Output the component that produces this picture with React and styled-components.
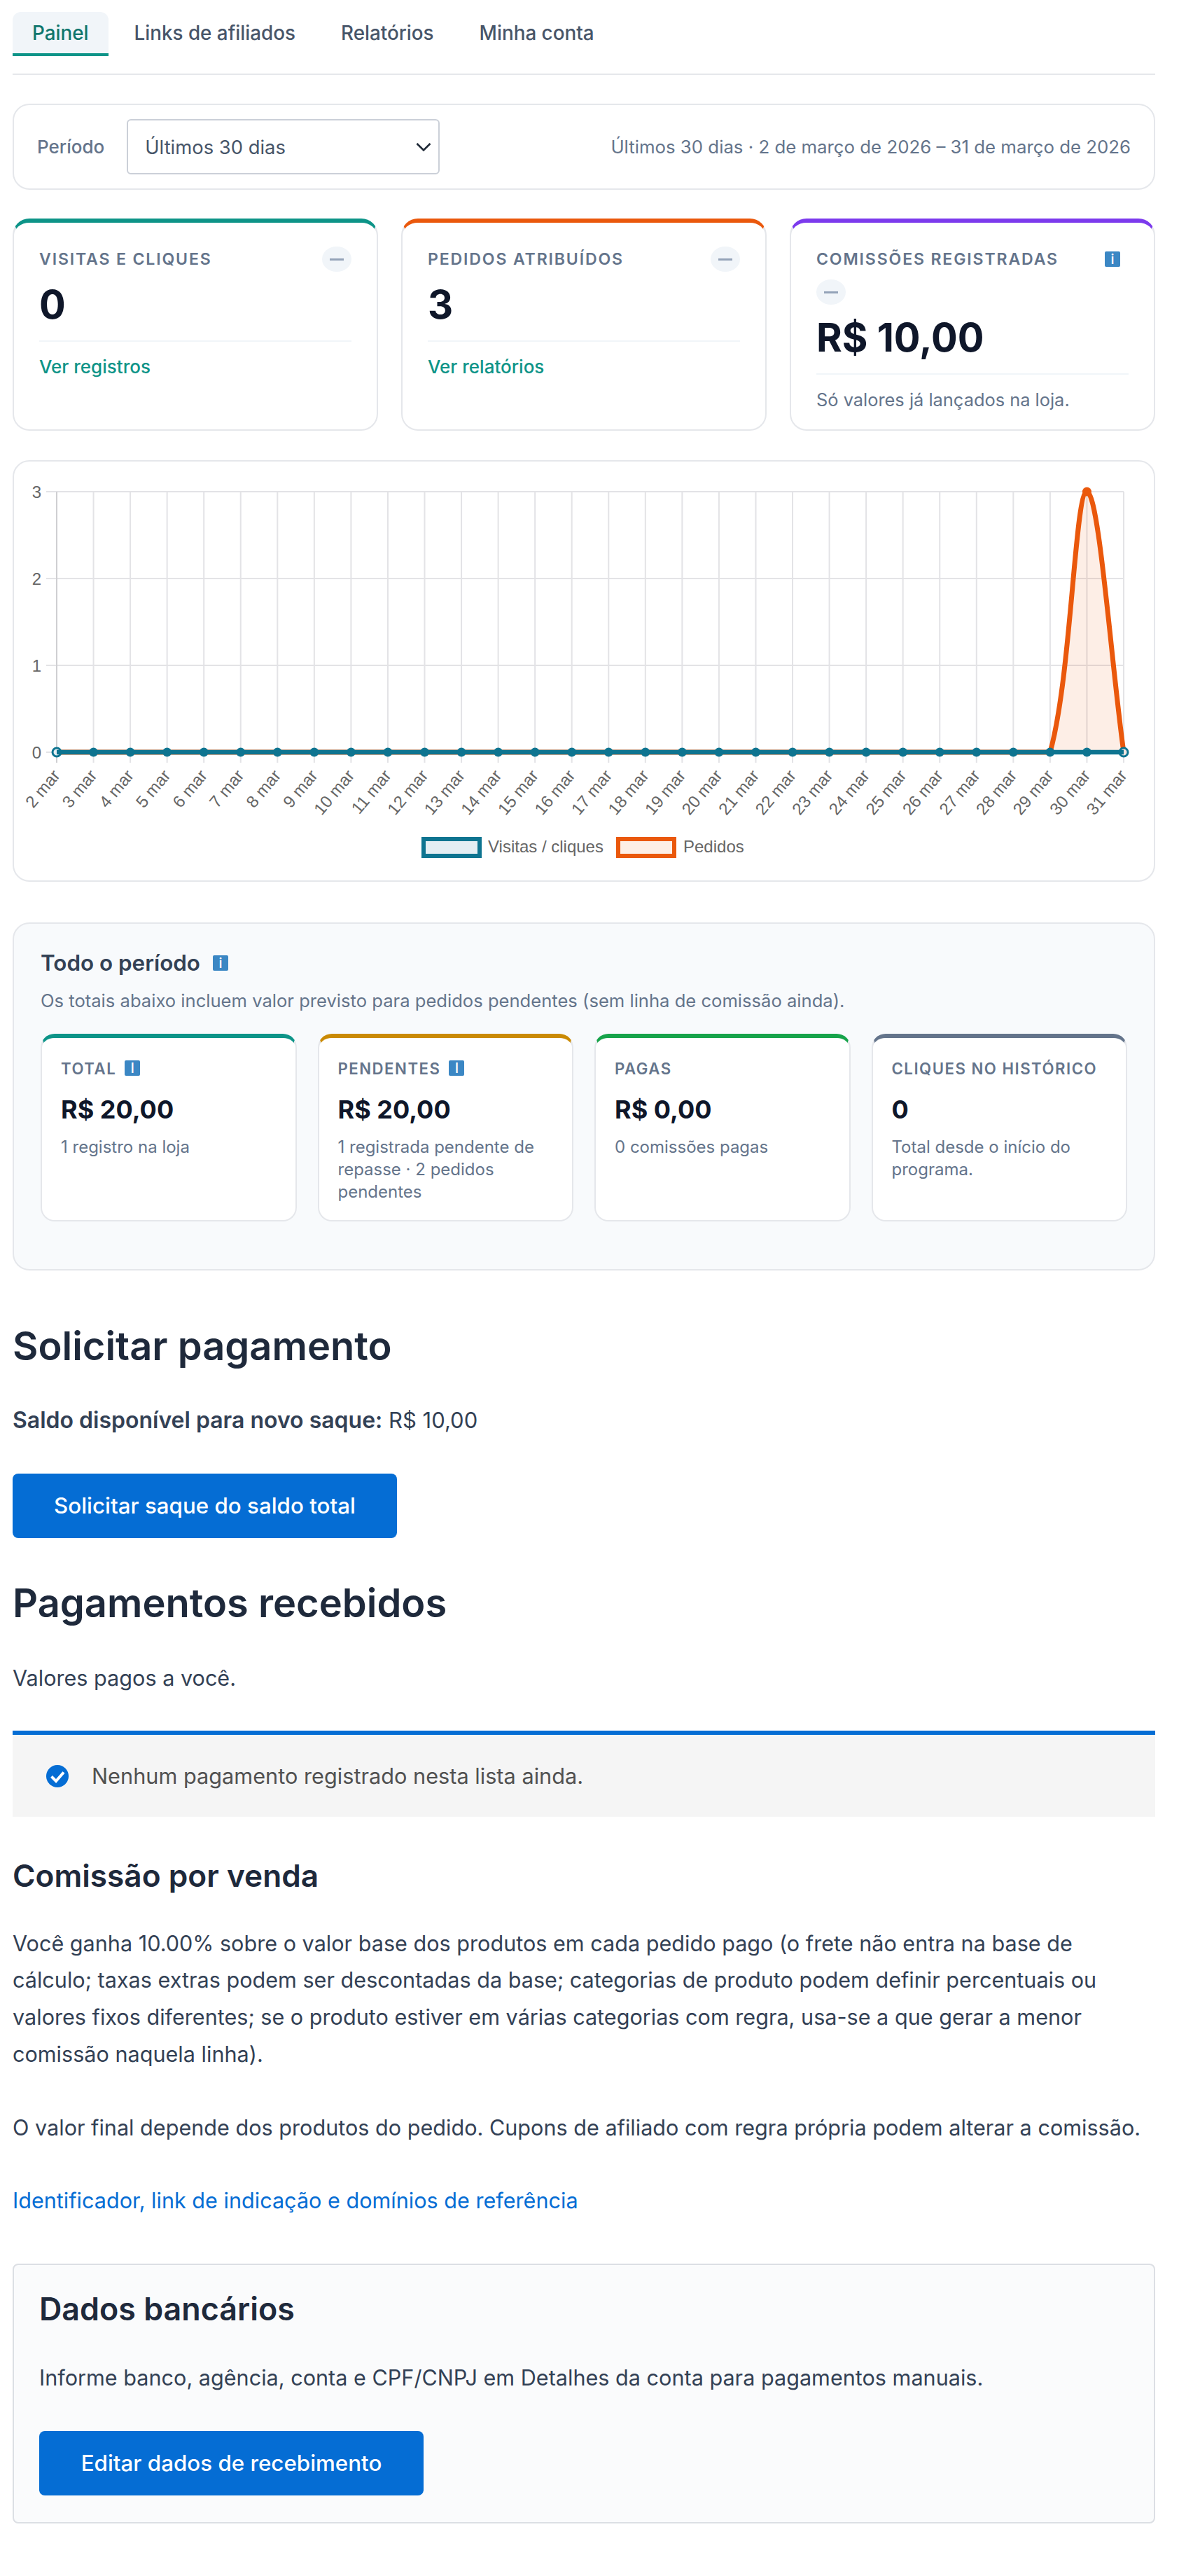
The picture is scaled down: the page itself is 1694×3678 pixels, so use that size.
import React from "react";
import styled, { createGlobalStyle } from "styled-components";

const GlobalStyle = createGlobalStyle`
  * {
    box-sizing: border-box;
  }
  body {
    margin: 0;
    background: #fff;
    font-family: Inter, "Liberation Sans", sans-serif;
    color: #334155;
  }
`;

const PLOT = { left: 61, right: 1585, top: 43, bottom: 415 };
const STEP = (PLOT.right - PLOT.left) / 29;
const DAYS = Array.from({ length: 30 }, (_, i) => i + 2);
const ORDERS = DAYS.map((d) => (d === 30 ? 3 : 0));

const px = (i) => PLOT.left + i * STEP;
const py = (v) => PLOT.bottom - (v / 3) * (PLOT.bottom - PLOT.top);

// same control points chart.js uses for a tensioned line
function splinePath(values, t) {
  const pts = values.map((v, i) => [px(i), py(v)]);
  let d = `M${pts[0][0]} ${pts[0][1]}`;
  const ctrl = pts.map((cur, i) => {
    const prev = pts[i - 1] || cur;
    const next = pts[i + 1] || cur;
    const d01 = Math.hypot(cur[0] - prev[0], cur[1] - prev[1]);
    const d12 = Math.hypot(next[0] - cur[0], next[1] - cur[1]);
    const s01 = d01 / (d01 + d12);
    const s12 = d12 / (d01 + d12);
    return {
      before: [cur[0] - t * s01 * (next[0] - prev[0]), Math.min(PLOT.bottom, cur[1] - t * s01 * (next[1] - prev[1]))],
      after: [cur[0] + t * s12 * (next[0] - prev[0]), Math.min(PLOT.bottom, cur[1] + t * s12 * (next[1] - prev[1]))],
    };
  });
  for (let i = 1; i < pts.length; i++) {
    const a = ctrl[i - 1].after;
    const b = ctrl[i].before;
    d += ` C${a[0]} ${a[1]} ${b[0]} ${b[1]} ${pts[i][0]} ${pts[i][1]}`;
  }
  return d;
}

const ordersLine = splinePath(ORDERS, 0.33);
const ordersArea = `${ordersLine} L${PLOT.right} ${PLOT.bottom} L${PLOT.left} ${PLOT.bottom} Z`;

function Chart() {
  return (
    <ChartSvg viewBox="0 0 1628 598" role="img" aria-label="Visitas e pedidos por dia">
      {[0, 1, 2, 3].map((v) => (
        <g key={v}>
          <line x1={PLOT.left - 15} x2={PLOT.right} y1={py(v)} y2={py(v)} stroke="#e3e3e6" strokeWidth="2" />
          <text x={PLOT.left - 22} y={py(v) + 9} textAnchor="end" fontSize="24" fill="#666">
            {v}
          </text>
        </g>
      ))}
      {DAYS.map((d, i) => (
        <g key={d}>
          <line
            x1={px(i)}
            x2={px(i)}
            y1={PLOT.top}
            y2={PLOT.bottom + 15}
            stroke={i === 0 ? "#cfcfd2" : "#e3e3e6"}
            strokeWidth="2"
          />
          <text
            transform={`translate(${px(i) + 6} ${PLOT.bottom + 34}) rotate(-50)`}
            textAnchor="end"
            fontSize="24"
            fill="#666"
          >
            {d} mar
          </text>
        </g>
      ))}
      <path d={ordersArea} fill="rgba(234, 88, 12, 0.1)" />
      <path d={ordersLine} fill="none" stroke="#ea580c" strokeWidth="7" />
      <circle cx={px(28)} cy={py(3)} r="6.5" fill="#ea580c" />
      <circle cx={px(0)} cy={PLOT.bottom} r="6" fill="#e4eef3" stroke="#0e7490" strokeWidth="3" />
      <circle cx={px(29)} cy={PLOT.bottom} r="6" fill="#f3e6e0" stroke="#0e7490" strokeWidth="3" />
      <line x1={px(0)} x2={px(29)} y1={PLOT.bottom} y2={PLOT.bottom} stroke="#0e7490" strokeWidth="6.5" />
      {DAYS.slice(1, 29).map((d, i) => (
        <circle key={d} cx={px(i + 1)} cy={PLOT.bottom} r="6.5" fill="#0e7490" />
      ))}
      <rect x="585" y="539" width="80" height="24" fill="#e4eef3" stroke="#0e7490" strokeWidth="6" />
      <text x="677" y="558" fontSize="24" fill="#666">
        Visitas / cliques
      </text>
      <rect x="863" y="539" width="80" height="24" fill="#fdefe6" stroke="#ea580c" strokeWidth="6" />
      <text x="956" y="558" fontSize="24" fill="#666">
        Pedidos
      </text>
    </ChartSvg>
  );
}

function InfoBadge() {
  return <Badge aria-label="Mais informações">i</Badge>;
}

function Trend() {
  return (
    <TrendPill>
      <TrendDash />
    </TrendPill>
  );
}

function KpiCard({ accent, label, help, value, children }) {
  return (
    <Kpi $accent={accent}>
      <KpiHead>
        <KpiLabel $help={help}>{label}</KpiLabel>
        {help && (
          <KpiHelp>
            <InfoBadge />
          </KpiHelp>
        )}
        <Trend />
      </KpiHead>
      <KpiValue>{value}</KpiValue>
      <KpiFoot>{children}</KpiFoot>
    </Kpi>
  );
}

function TotalCard({ accent, label, help, value, note }) {
  return (
    <Total $accent={accent}>
      <TotalLabel>
        {label}
        {help && <InfoBadge />}
      </TotalLabel>
      <TotalValue>{value}</TotalValue>
      <TotalNote>{note}</TotalNote>
    </Total>
  );
}

export default function App() {
  return (
    <>
      <GlobalStyle />
      <Page>
        <Tabs>
          <Tab $active>Painel</Tab>
          <Tab>Links de afiliados</Tab>
          <Tab>Relatórios</Tab>
          <Tab>Minha conta</Tab>
        </Tabs>

        <PeriodBar>
          <PeriodLeft>
            <PeriodLabel>Período</PeriodLabel>
            <SelectBox>
              Últimos 30 dias
              <svg width="22" height="14" viewBox="0 0 22 14" fill="none">
                <path d="M1.5 2l9.5 9.5L20.5 2" stroke="#1f2937" strokeWidth="2.6" />
              </svg>
            </SelectBox>
          </PeriodLeft>
          <PeriodRange>Últimos 30 dias · 2 de março de 2026 – 31 de março de 2026</PeriodRange>
        </PeriodBar>

        <KpiGrid>
          <KpiCard accent="#0d9488" label="Visitas e cliques" value="0">
            <KpiLink>Ver registros</KpiLink>
          </KpiCard>
          <KpiCard accent="#ea580c" label="Pedidos atribuídos" value="3">
            <KpiLink>Ver relatórios</KpiLink>
          </KpiCard>
          <KpiCard accent="#7c3aed" label="Comissões registradas" help value="R$ 10,00">
            <KpiNote>Só valores já lançados na loja.</KpiNote>
          </KpiCard>
        </KpiGrid>

        <ChartCard>
          <Chart />
        </ChartCard>

        <AllTime>
          <AllTimeTitle>
            Todo o período
            <InfoBadge />
          </AllTimeTitle>
          <AllTimeSub>Os totais abaixo incluem valor previsto para pedidos pendentes (sem linha de comissão ainda).</AllTimeSub>
          <TotalsGrid>
            <TotalCard accent="#0d9488" label="Total" help value="R$ 20,00" note="1 registro na loja" />
            <TotalCard
              accent="#ca8a04"
              label="Pendentes"
              help
              value="R$ 20,00"
              note="1 registrada pendente de repasse · 2 pedidos pendentes"
            />
            <TotalCard accent="#16a34a" label="Pagas" value="R$ 0,00" note="0 comissões pagas" />
            <TotalCard accent="#64748b" label="Cliques no histórico" value="0" note="Total desde o início do programa." />
          </TotalsGrid>
        </AllTime>

        <SectionTitle>Solicitar pagamento</SectionTitle>
        <Balance>
          <strong>Saldo disponível para novo saque:</strong> R$ 10,00
        </Balance>
        <PrimaryButton>Solicitar saque do saldo total</PrimaryButton>

        <SectionTitle $tight>Pagamentos recebidos</SectionTitle>
        <Lead>Valores pagos a você.</Lead>
        <Notice>
          <svg width="32" height="32" viewBox="0 0 32 32">
            <circle cx="16" cy="16" r="16" fill="#056dd4" />
            <path d="M7.5 16.5l6.5 6.5L25 10.5" fill="none" stroke="#fff" strokeWidth="4" />
          </svg>
          Nenhum pagamento registrado nesta lista ainda.
        </Notice>

        <SubTitle>Comissão por venda</SubTitle>
        <Copy>
          Você ganha 10.00% sobre o valor base dos produtos em cada pedido pago (o frete não entra na base de cálculo;
          taxas extras podem ser descontadas da base; categorias de produto podem definir percentuais ou valores fixos
          diferentes; se o produto estiver em várias categorias com regra, usa-se a que gerar a menor comissão naquela
          linha).
        </Copy>
        <Copy>
          O valor final depende dos produtos do pedido. Cupons de afiliado com regra própria podem alterar a comissão.
        </Copy>
        <Copy>
          <TextLink>Identificador, link de indicação e domínios de referência</TextLink>
        </Copy>

        <BankCard>
          <BankTitle>Dados bancários</BankTitle>
          <BankText>Informe banco, agência, conta e CPF/CNPJ em Detalhes da conta para pagamentos manuais.</BankText>
          <PrimaryButton>Editar dados de recebimento</PrimaryButton>
        </BankCard>
      </Page>
    </>
  );
}

const Page = styled.div`
  width: 1632px;
  margin-left: 18px;
  padding: 17px 0 76px;
`;

const Tabs = styled.nav`
  display: flex;
  gap: 9px;
  height: 90px;
  border-bottom: 2px solid #e5e7eb;
`;

const Tab = styled.a`
  height: 63px;
  padding: 0 28px;
  display: flex;
  align-items: center;
  font-size: 27.8px;
  font-weight: 500;
  color: ${({ $active }) => ($active ? "#0f766e" : "#475569")};
  background: ${({ $active }) => ($active ? "#f1f5f9" : "transparent")};
  border-bottom: 4px solid ${({ $active }) => ($active ? "#0d9488" : "transparent")};
  border-radius: 12px 12px 0 0;
`;

const PeriodBar = styled.section`
  margin-top: 41px;
  height: 123px;
  padding: 0 33px;
  display: flex;
  align-items: center;
  justify-content: space-between;
  border: 2px solid #e5e7eb;
  border-radius: 24px;
  background: #fff;
`;

const PeriodLeft = styled.div`
  display: flex;
  align-items: center;
  gap: 32px;
`;

const PeriodLabel = styled.span`
  font-size: 26px;
  font-weight: 500;
  color: #64748b;
`;

const SelectBox = styled.div`
  width: 447px;
  height: 79px;
  padding: 0 10px 0 24px;
  display: flex;
  align-items: center;
  justify-content: space-between;
  border: 2px solid #cbd0d8;
  border-radius: 6px;
  font-size: 27.4px;
  color: #475569;
`;

const PeriodRange = styled.span`
  font-size: 25.8px;
  color: #64748b;
`;

const KpiGrid = styled.div`
  margin-top: 41px;
  display: grid;
  grid-template-columns: repeat(3, 1fr);
  gap: 33px;
`;

const Kpi = styled.article`
  height: 303px;
  padding: 34px 36px 0;
  border: 2px solid #e5e7eb;
  border-top: 6px solid ${({ $accent }) => $accent};
  border-radius: 24px;
  background: #fff;
`;

const KpiHead = styled.div`
  display: flex;
  flex-wrap: wrap;
  align-items: center;
  justify-content: space-between;
  row-gap: 11px;
`;

const KpiLabel = styled.span`
  font-size: 23.1px;
  line-height: 36px;
  font-weight: 600;
  letter-spacing: 1.84px;
  text-transform: uppercase;
  color: #64748b;
  min-width: ${({ $help }) => ($help ? "400px" : "0")};
`;

const KpiHelp = styled.span`
  display: flex;
  margin-right: 12px;
`;

const Badge = styled.span`
  display: inline-flex;
  align-items: center;
  justify-content: center;
  width: 22px;
  height: 22px;
  border-radius: 2px;
  background: #3b87c4;
  color: #fff;
  font-size: 20px;
  font-weight: 500;
  line-height: 1;
  letter-spacing: 0;
`;

const TrendPill = styled.span`
  flex: 0 0 42px;
  height: 36px;
  border-radius: 50%;
  background: #f1f5f9;
  display: flex;
  align-items: center;
  justify-content: center;
`;

const TrendDash = styled.i`
  width: 20px;
  height: 3px;
  background: #94a3b8;
`;

const KpiValue = styled.div`
  margin-top: 11px;
  font-size: 56px;
  font-weight: 700;
  line-height: 72px;
  color: #0f172a;
`;

const KpiFoot = styled.div`
  margin-top: 15px;
  padding-top: 18px;
  border-top: 2px solid #f1f5f9;
  line-height: 36px;
`;

const KpiLink = styled.a`
  font-size: 26px;
  font-weight: 500;
  color: #0d9488;
`;

const KpiNote = styled.span`
  font-size: 25.4px;
  color: #64748b;
`;

const ChartCard = styled.section`
  margin-top: 42px;
  height: 602px;
  border: 2px solid #e5e7eb;
  border-radius: 24px;
  background: #fff;
`;

const ChartSvg = styled.svg`
  display: block;
  width: 1628px;
  height: 598px;
  font-family: "Liberation Sans", Arial, sans-serif;
`;

const AllTime = styled.section`
  margin-top: 58px;
  height: 497px;
  padding: 36px 38px 0;
  border: 2px solid #e5e7eb;
  border-radius: 24px;
  background: #f8fafc;
`;

const AllTimeTitle = styled.h3`
  margin: 0;
  display: flex;
  align-items: center;
  gap: 18px;
  font-size: 31.4px;
  line-height: 40px;
  font-weight: 600;
  color: #334155;
`;

const AllTimeSub = styled.p`
  margin: 14px 0 0;
  font-size: 25.6px;
  line-height: 40px;
  color: #64748b;
`;

const TotalsGrid = styled.div`
  margin-top: 27px;
  display: grid;
  grid-template-columns: repeat(4, 1fr);
  gap: 30px;
`;

const Total = styled.article`
  height: 268px;
  padding: 28px 27px 0;
  border: 2px solid #e5e7eb;
  border-top: 6px solid ${({ $accent }) => $accent};
  border-radius: 20px;
  background: #fff;
`;

const TotalLabel = styled.div`
  display: flex;
  align-items: center;
  gap: 12px;
  height: 30px;
  font-size: 22.2px;
  font-weight: 600;
  letter-spacing: 1.5px;
  text-transform: uppercase;
  color: #64748b;
`;

const TotalValue = styled.div`
  margin-top: 19px;
  font-size: 36px;
  line-height: 50px;
  font-weight: 700;
  color: #0f172a;
`;

const TotalNote = styled.p`
  margin: 13px 0 0;
  font-size: 24px;
  line-height: 32px;
  color: #64748b;
`;

const SectionTitle = styled.h2`
  margin: ${({ $tight }) => ($tight ? "56px" : "71px")} 0 0;
  font-size: 56px;
  line-height: 74px;
  font-weight: 600;
  color: #1e293b;
`;

const Balance = styled.p`
  margin: 43px 0 50px;
  font-size: 31px;
  line-height: 52px;
  color: #334155;

  strong {
    font-size: 32px;
    font-weight: 600;
  }
`;

const PrimaryButton = styled.a`
  display: flex;
  align-items: center;
  justify-content: center;
  width: 549px;
  height: 92px;
  border-radius: 8px;
  background: #056dd4;
  color: #fff;
  font-size: 31.3px;
  font-weight: 500;
`;

const Lead = styled.p`
  margin: 44px 0 0;
  font-size: 30.6px;
  line-height: 52px;
  color: #334155;
`;

const Notice = styled.div`
  margin-top: 49px;
  height: 123px;
  padding: 0 48px;
  display: flex;
  align-items: center;
  gap: 33px;
  border-top: 6px solid #056dd4;
  background: #f5f5f5;
  font-size: 30.7px;
  color: #515151;
`;

const SubTitle = styled.h3`
  margin: 51px 0 0;
  font-size: 44.2px;
  line-height: 66px;
  font-weight: 600;
  color: #1e293b;
`;

const Copy = styled.p`
  margin: 52px 0 0;
  font-size: 30.6px;
  line-height: 52.8px;
  color: #334155;

  ${SubTitle} + & {
    margin-top: 37.5px;
  }
`;

const TextLink = styled.a`
  color: #056dd4;
`;

const BankCard = styled.section`
  margin-top: 63px;
  height: 371px;
  padding: 30px 36px 0;
  border: 2px solid #dcdfe4;
  border-radius: 8px;
  background: #fafbfc;
`;

const BankTitle = styled.h3`
  margin: 0;
  font-size: 44.8px;
  line-height: 66px;
  font-weight: 600;
  color: #1e293b;
`;

const BankText = styled.p`
  margin: 37.5px 0 50px;
  font-size: 30.6px;
  line-height: 53px;
  color: #334155;
`;
